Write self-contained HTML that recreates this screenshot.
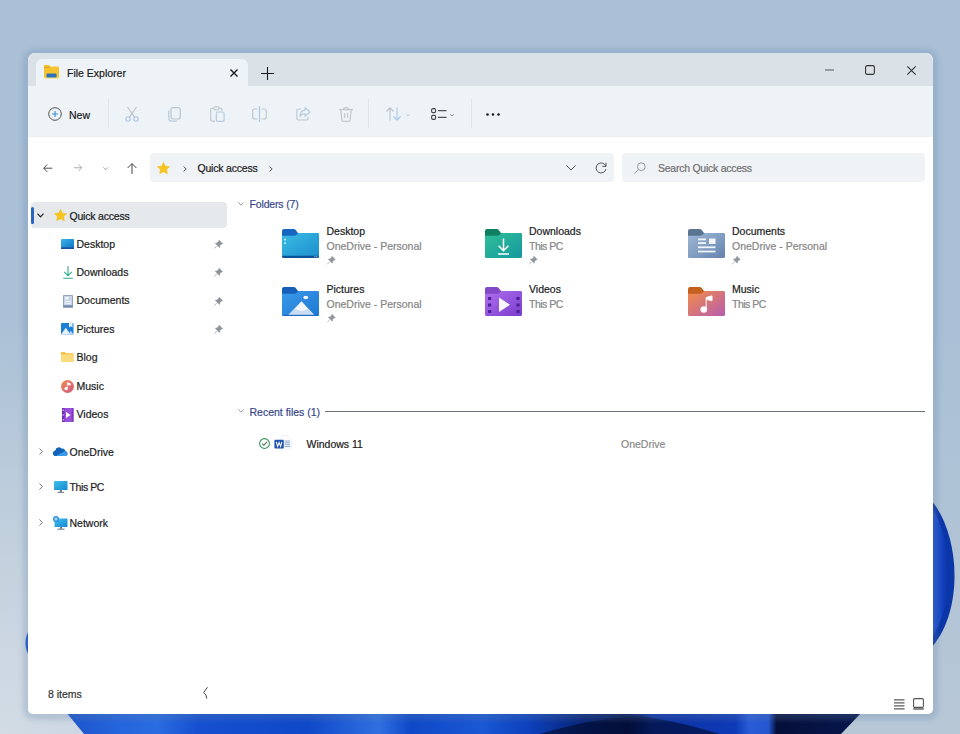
<!DOCTYPE html>
<html lang="en">
<head>
<meta charset="utf-8">
<title>File Explorer</title>
<style>
*{box-sizing:border-box;margin:0;padding:0}
html,body{width:960px;height:734px;overflow:hidden}
body{position:relative;font-family:"Liberation Sans",sans-serif;font-size:10.5px;color:#1b1b1b;background:#a9c0d6}
.abs{position:absolute}
#wall{position:absolute;left:0;top:0;width:960px;height:734px}
#shadow{position:absolute;left:28px;top:53px;width:905px;height:661px;border-radius:7px 7px 5px 5px;box-shadow:0 1px 5px 5px rgba(100,130,170,.26)}
#win{position:absolute;left:28px;top:53px;width:905px;height:661px;border-radius:7px 7px 5px 5px;background:#fff;overflow:hidden}
#titlebar{position:absolute;left:0;top:0;width:905px;height:33px;background:#dae2e7}
#tab{position:absolute;left:8px;top:6px;width:212px;height:28px;background:#eef3f7;border-radius:6px 6px 0 0}
#toolbar{position:absolute;left:0;top:33px;width:905px;height:51px;background:#eef3f7;border-bottom:1px solid #ecf0f4}
.t{position:absolute;white-space:nowrap;line-height:12px;-webkit-text-stroke:.2px currentColor}
.sep{position:absolute;top:46px;width:1px;height:29px;background:#dfe5ea}
.box{position:absolute;top:100px;height:29px;background:#f0f3f6;border-radius:4px}
.sb{position:absolute;left:0;white-space:nowrap;line-height:12px}
.g{color:#858585}
.hd{color:#38478a}
svg{position:absolute;overflow:visible}
</style>
</head>
<body>
<svg id="wall" viewBox="0 0 960 734">
  <defs>
    <linearGradient id="bgg" x1="0" y1="0" x2="0" y2="1">
      <stop offset="0" stop-color="#a9c0d6"/>
      <stop offset=".45" stop-color="#a9c0d6"/>
      <stop offset="1" stop-color="#b7c7d6"/>
    </linearGradient>
    <radialGradient id="bgl" gradientUnits="userSpaceOnUse" cx="0" cy="734" r="420">
      <stop offset="0" stop-color="#d3dce5" stop-opacity="1"/>
      <stop offset=".35" stop-color="#cdd8e2" stop-opacity=".75"/>
      <stop offset="1" stop-color="#c8d4df" stop-opacity="0"/>
    </radialGradient>
    <linearGradient id="bl1" gradientUnits="userSpaceOnUse" x1="70" y1="0" x2="862" y2="0">
      <stop offset="0" stop-color="#1d55cc"/>
      <stop offset=".06" stop-color="#2464dc"/>
      <stop offset=".11" stop-color="#2a6ce2"/>
      <stop offset=".16" stop-color="#1650d0"/>
      <stop offset=".3" stop-color="#0f48c8"/>
      <stop offset=".39" stop-color="#2f70e2"/>
      <stop offset=".43" stop-color="#0f48c8"/>
      <stop offset=".52" stop-color="#1a58d4"/>
      <stop offset=".58" stop-color="#0d40bc"/>
      <stop offset=".65" stop-color="#072272"/>
      <stop offset=".705" stop-color="#04144c"/>
      <stop offset=".735" stop-color="#0b30a0"/>
      <stop offset=".84" stop-color="#0e3ab8"/>
      <stop offset=".858" stop-color="#2a5cd8"/>
      <stop offset=".882" stop-color="#2456d0"/>
      <stop offset=".892" stop-color="#050f3a"/>
      <stop offset="1" stop-color="#06164c"/>
    </linearGradient>
    <linearGradient id="pet" x1="0" y1="0" x2="1" y2="0">
      <stop offset="0" stop-color="#1b52d2"/>
      <stop offset=".55" stop-color="#1546c4"/>
      <stop offset="1" stop-color="#0b34a4"/>
    </linearGradient>
  </defs>
  <rect width="960" height="734" fill="url(#bgg)"/>
  <rect width="960" height="734" fill="url(#bgl)"/>
  <path d="M66 712 L862 712 L841 734 L84 734 Z" fill="url(#bl1)"/>
  <path d="M540 734 C580 722 610 718 640 716 C670 720 700 728 720 734 Z" fill="#020a2c" opacity=".6"/>
  <path d="M930 499 C946 516 955 548 954.500 578 C954 606 946 632 930 649 Z" fill="#0b36a8"/>
  <path d="M930 505 C942 520 949 550 948.500 578 C948 600 942 624 930 640 Z" fill="url(#pet)"/>
  <path d="M30 629 C24 636 24 650 30 657 Z" fill="#1a56d0"/>
</svg>
<div id="shadow"></div>
<div id="win">
  <div id="titlebar"></div>
  <div id="tab"></div>
  <div id="toolbar"></div>

  <!-- tab content -->
  <svg style="left:16px;top:12px" width="15" height="14" viewBox="0 0 15 14">
    <path d="M0 1.2 Q0 0 1.2 0 H5 L6.5 1.6 H13.8 Q15 1.6 15 2.8 V12 Q15 13 14 13 H1 Q0 13 0 12 Z" fill="#f6c330"/>
    <rect x="0" y="1.6" width="6" height="1.2" fill="#e0a21c"/>
    <path d="M2.5 13 V9.6 Q2.5 8.4 3.7 8.4 H11.3 Q12.5 8.4 12.5 9.6 V13 Z" fill="#2a72b8"/>
    <rect x="0" y="12.6" width="15" height="1.2" rx=".5" fill="#fbe08a"/>
  </svg>
  <div class="t" id="t_tab" style="left:39px;top:13.500px;font-size:10.5px">File Explorer</div>
  <svg style="left:202px;top:16px" width="8" height="8" viewBox="0 0 8 8"><path d="M.5 .5 L7.5 7.5 M7.5 .5 L.5 7.5" stroke="#1b1b1b" stroke-width="1.4" fill="none"/></svg>
  <svg style="left:233px;top:14px" width="13" height="13" viewBox="0 0 13 13"><path d="M6.5 0 V13 M0 6.5 H13" stroke="#1b1b1b" stroke-width="1.1" fill="none"/></svg>

  <!-- window controls -->
  <svg style="left:797px;top:16px" width="9" height="2" viewBox="0 0 9 2"><path d="M0 1 H9" stroke="#555" stroke-width="1.1"/></svg>
  <svg style="left:837px;top:12px" width="10" height="10" viewBox="0 0 10 10"><rect x=".6" y=".6" width="8.8" height="8.8" rx="1.6" fill="none" stroke="#333" stroke-width="1.1"/></svg>
  <svg style="left:879px;top:12.5px" width="9" height="9" viewBox="0 0 9 9"><path d="M.3 .3 L8.7 8.7 M8.7 .3 L.3 8.7" stroke="#333" stroke-width="1.1" fill="none"/></svg>

  <!-- toolbar -->
  <svg style="left:20px;top:54px" width="14" height="14" viewBox="0 0 14 14"><circle cx="7" cy="7" r="6.3" fill="none" stroke="#555" stroke-width="1"/><path d="M7 4 V10 M4 7 H10" stroke="#3b8ad8" stroke-width="1.1"/></svg>
  <div class="t" id="t_new" style="left:41px;top:55.500px">New</div>
  <div class="sep" style="left:80px"></div>
  <!-- scissors -->
  <svg style="left:97px;top:54px" width="14" height="15" viewBox="0 0 14 15" fill="none" stroke="#b3c3d3" stroke-width="1.1"><path d="M2.5 0 L9.6 10.4 M11.5 0 L4.4 10.4" stroke="#bcc4cc"/><circle cx="3" cy="12" r="2.2" stroke="#a9c6e4"/><circle cx="11" cy="12" r="2.2" stroke="#a9c6e4"/></svg>
  <!-- copy -->
  <svg style="left:139.5px;top:54px" width="13" height="15" viewBox="0 0 13 15" fill="none" stroke="#b9c6d4" stroke-width="1.2"><rect x="3" y=".6" width="9.2" height="11.4" rx="2"/><path d="M.8 3.5 V11.5 Q.8 14.2 3.5 14.2 H9" stroke="#b4cbe2"/></svg>
  <!-- paste -->
  <svg style="left:181.5px;top:53px" width="15" height="16" viewBox="0 0 15 16" fill="none" stroke="#c3c9d0" stroke-width="1.2"><path d="M4 2.4 H1.8 Q.7 2.4 .7 3.5 V14 Q.7 15.2 1.8 15.2 H5 M9 2.4 H11 Q12 2.4 12 3.5 V5"/><rect x="4" y=".8" width="5" height="3" rx="1"/><rect x="6.3" y="6" width="7.8" height="9.3" rx="1.4" stroke="#b4cbe2"/></svg>
  <!-- rename -->
  <svg style="left:224px;top:53px" width="15" height="16" viewBox="0 0 15 16" fill="none" stroke="#c0c8d0" stroke-width="1.2"><path d="M5.5 3 H2.8 Q.7 3 .7 5 V11 Q.7 13 2.8 13 H5.5 M9.5 3 H12.2 Q14.3 3 14.3 5 V11 Q14.3 13 12.2 13 H9.5"/><path d="M7.5 0 V16" stroke="#a9c9ea"/></svg>
  <!-- share -->
  <svg style="left:267.5px;top:54px" width="15" height="14" viewBox="0 0 15 14" fill="none" stroke="#b6cbe0" stroke-width="1.2" stroke-linejoin="round"><path d="M5 2 H2.8 Q.8 2 .8 4 V11 Q.8 13 2.8 13 H10 Q12 13 12 11 V10" stroke="#c2cad2"/><path d="M9 .8 L14 5 L9 9.2 V6.8 Q5.5 6.6 4 9.5 Q4.2 3.6 9 3.2 Z"/></svg>
  <!-- trash -->
  <svg style="left:310.5px;top:54px" width="14" height="15" viewBox="0 0 14 15" fill="none" stroke="#c3c8ce" stroke-width="1.2"><path d="M0 2.6 H14 M4.6 2.4 Q4.6 .6 7 .6 Q9.4 .6 9.4 2.4 M1.8 2.8 L2.8 12.6 Q3 14.3 4.6 14.3 H9.4 Q11 14.3 11.2 12.6 L12.2 2.8 M5.5 6 V11 M8.5 6 V11"/></svg>
  <div class="sep" style="left:340px"></div>
  <!-- sort -->
  <svg style="left:358px;top:54px" width="15" height="14" viewBox="0 0 15 14" fill="none" stroke="#b9c3cd" stroke-width="1.1"><path d="M4 13.5 V1 M.5 4.5 L4 .8 L7.5 4.5"/><path d="M11 .5 V13 M7.5 9.5 L11 13.2 L14.500 9.5" stroke="#a9c9ea"/></svg>
  <svg style="left:377.500px;top:60.500px" width="4" height="2.400" viewBox="0 0 5 3"><path d="M.3 .3 L2.500 2.500 L4.700 .3" fill="none" stroke="#b0b8c0" stroke-width=".9"/></svg>
  <!-- view -->
  <svg style="left:402.500px;top:55px" width="16" height="12" viewBox="0 0 16 12" fill="none" stroke="#444" stroke-width="1.1"><rect x=".6" y=".6" width="4" height="4" rx="1.3"/><rect x=".6" y="7.400" width="4" height="4" rx="1.3"/><path d="M7 2.600 H15.500 M7 9.400 H15.500" stroke="#555"/></svg>
  <svg style="left:421.500px;top:60.500px" width="4" height="2.400" viewBox="0 0 5 3"><path d="M.3 .3 L2.500 2.500 L4.700 .3" fill="none" stroke="#555" stroke-width=".9"/></svg>
  <div class="sep" style="left:443px"></div>
  <svg style="left:458px;top:59.500px" width="14" height="3" viewBox="0 0 14 3" fill="#1b1b1b"><circle cx="1.500" cy="1.500" r="1.300"/><circle cx="7" cy="1.500" r="1.300"/><circle cx="12.500" cy="1.500" r="1.300"/></svg>

  <!-- nav row -->
  <svg style="left:14.500px;top:110.800px" width="9.400" height="8.400" viewBox="0 0 10 9" fill="none" stroke="#444" stroke-width="1"><path d="M10 4.500 H.8 M4.500 .5 L.7 4.500 L4.500 8.500"/></svg>
  <svg style="left:46.400px;top:111.200px" width="8.400" height="7.500" viewBox="0 0 9 8" fill="none" stroke="#a8a8a8" stroke-width="1"><path d="M0 4 H8.200 M5 .5 L8.400 4 L5 7.500"/></svg>
  <svg style="left:74.800px;top:113.800px" width="5.200" height="3.500" viewBox="0 0 6 4"><path d="M.4 .4 L3 3.200 L5.600 .4" fill="none" stroke="#888" stroke-width=".9"/></svg>
  <svg style="left:99px;top:110px" width="10" height="11" viewBox="0 0 10 11" fill="none" stroke="#444" stroke-width="1"><path d="M5 11 V.8 M.6 5 L5 .6 L9.400 5"/></svg>
  <div class="box" style="left:122px;width:464px"></div>
  <div class="box" style="left:594px;width:303px"></div>
  <svg style="left:129px;top:109px" width="13" height="12" viewBox="0 0 13 12"><path d="M6.500 .3 L8.400 4.200 L12.700 4.700 L9.500 7.600 L10.400 11.800 L6.500 9.700 L2.600 11.800 L3.500 7.600 L.3 4.700 L4.600 4.200 Z" fill="#f8c51c" stroke="#f0b400" stroke-width=".4" stroke-linejoin="round"/></svg>
  <svg style="left:154.500px;top:112.500px" width="4" height="6" viewBox="0 0 4 6"><path d="M.6 .5 L3.200 3 L.6 5.500" fill="none" stroke="#444" stroke-width=".9"/></svg>
  <div class="t" id="t_addr" style="left:169.500px;top:109px;letter-spacing:-.2px">Quick access</div>
  <svg style="left:240.500px;top:112.500px" width="4" height="6" viewBox="0 0 4 6"><path d="M.6 .5 L3.200 3 L.6 5.500" fill="none" stroke="#444" stroke-width=".9"/></svg>
  <svg style="left:538px;top:112px" width="10" height="6" viewBox="0 0 10 6"><path d="M.5 .5 L5 5 L9.500 .5" fill="none" stroke="#555" stroke-width="1"/></svg>
  <svg style="left:566.500px;top:108.500px" width="12" height="12" viewBox="0 0 12 12" fill="none" stroke="#555" stroke-width="1"><path d="M10.800 4.200 A5 5 0 1 0 11 7"/><path d="M11 .8 V4.400 H7.400"/></svg>
  <svg style="left:606px;top:109px" width="12" height="12" viewBox="0 0 12 12" fill="none" stroke="#999" stroke-width="1"><circle cx="7.300" cy="4.700" r="3.900"/><path d="M4.500 7.500 L.5 11.500"/></svg>
  <div class="t g" id="t_search" style="left:630px;top:109px;color:#707070;letter-spacing:-.25px">Search Quick access</div>

  <!-- sidebar -->
  <div class="abs" style="left:3px;top:149px;width:196px;height:26px;background:#e5e9ec;border-radius:4px"></div>
  <div class="abs" style="left:3px;top:153.500px;width:2.500px;height:17px;background:#2a64c0;border-radius:1.500px"></div>
  <svg style="left:9px;top:160px" width="7" height="5" viewBox="0 0 7 5"><path d="M.5 .6 L3.500 3.800 L6.500 .6" fill="none" stroke="#222" stroke-width="1.200"/></svg>
  <svg style="left:25.500px;top:156px" width="13" height="12" viewBox="0 0 13 12"><path d="M6.500 .3 L8.400 4.200 L12.700 4.700 L9.500 7.600 L10.400 11.800 L6.500 9.700 L2.600 11.800 L3.500 7.600 L.3 4.700 L4.600 4.200 Z" fill="#f8c51c" stroke="#f0b400" stroke-width=".4" stroke-linejoin="round"/></svg>
  <div class="t" id="s_qa" style="left:41.500px;top:156.500px;letter-spacing:-.2px">Quick access</div>

  <!-- Desktop -->
  <svg style="left:33px;top:185.500px" width="13" height="10" viewBox="0 0 13 10"><defs><linearGradient id="dk" x1="0" y1="0" x2="1" y2="1"><stop offset="0" stop-color="#39b6e8"/><stop offset="1" stop-color="#0f72c4"/></linearGradient></defs><rect width="13" height="9.300" rx=".8" fill="url(#dk)"/><rect y="8.400" width="13" height="1.600" fill="#1a4f9c"/></svg>
  <div class="t" id="s_desktop" style="left:48.500px;top:185px">Desktop</div>
  <!-- Downloads -->
  <svg style="left:34.500px;top:213px" width="10" height="13" viewBox="0 0 10 13" fill="none" stroke="#2fae8e" stroke-width="1.100"><path d="M5 0 V9.500 M1.200 5.800 L5 9.700 L8.800 5.800 M.2 12.300 H9.800"/></svg>
  <div class="t" id="s_downloads" style="left:48.500px;top:213.400px">Downloads</div>
  <!-- Documents -->
  <svg style="left:35px;top:241.500px" width="10" height="12.500" viewBox="0 0 10 12.500"><rect width="10" height="12.500" rx="1" fill="#8fa6c4"/><rect x="1" y="1" width="8" height="9" fill="#c9d6e6"/><rect x="2.500" y="2" width="3" height="2.500" fill="#f4f7fb"/><rect x="2" y="6" width="6" height=".9" fill="#f4f7fb"/><rect x="2" y="7.800" width="6" height=".9" fill="#f4f7fb"/><rect y="10.800" width="10" height="1.700" fill="#6f87a8"/></svg>
  <div class="t" id="s_documents" style="left:48.500px;top:241.400px">Documents</div>
  <!-- Pictures -->
  <svg style="left:33px;top:270px" width="12.500" height="11.500" viewBox="0 0 12.500 11.500"><rect width="12.500" height="11.500" rx="1" fill="#1c7fd6"/><path d="M0 11.500 L4.800 4.800 L9.600 11.500 Z" fill="#e8f1fb"/><path d="M7 11.500 L9.800 7.800 L12.500 11.500 Z" fill="#b9d5f2"/><path d="M8 0 H11.500 V4.500 L9.750 3.200 L8 4.500 Z" fill="#e8f1fb"/></svg>
  <div class="t" id="s_pictures" style="left:48.500px;top:269.800px">Pictures</div>
  <!-- Blog -->
  <svg style="left:33px;top:299px" width="12.500" height="10" viewBox="0 0 12.500 10"><path d="M0 .8 Q0 0 .8 0 H4 L5 1.200 H11.700 Q12.500 1.200 12.500 2 V9.200 Q12.500 10 11.700 10 H.8 Q0 10 0 9.200 Z" fill="#f3c044"/><path d="M0 2.600 H12.500 V9.200 Q12.500 10 11.700 10 H.8 Q0 10 0 9.200 Z" fill="#fbdc7c"/></svg>
  <div class="t" id="s_blog" style="left:48.500px;top:298.400px">Blog</div>
  <!-- Music -->
  <svg style="left:33px;top:326.500px" width="13" height="13" viewBox="0 0 13 13"><defs><linearGradient id="mu" x1="0" y1="0" x2="1" y2="1"><stop offset="0" stop-color="#ee8a52"/><stop offset="1" stop-color="#cf5a86"/></linearGradient></defs><circle cx="6.500" cy="6.500" r="6.500" fill="url(#mu)"/><circle cx="5.200" cy="8.600" r="1.700" fill="#fff"/><path d="M6.300 8.600 V2.600 L9.300 3.500 V5.200 L6.300 4.400" fill="#fff" stroke="#fff" stroke-width=".6"/></svg>
  <div class="t" id="s_music" style="left:48.500px;top:326.800px">Music</div>
  <!-- Videos -->
  <svg style="left:33.500px;top:354.500px" width="11.500" height="14" viewBox="0 0 11.500 14"><rect width="11.500" height="14" rx="1" fill="#9a4fd8"/><rect width="2.400" height="14" fill="#6f2fb4"/><rect x="9.800" width="1.700" height="14" fill="#7d3cc4"/><path d="M4 4 L8.600 7 L4 10 Z" fill="#fff"/><rect x=".6" y="1.500" width="1.200" height="1.500" fill="#d9b8f4"/><rect x=".6" y="6.200" width="1.200" height="1.500" fill="#d9b8f4"/><rect x=".6" y="11" width="1.200" height="1.500" fill="#d9b8f4"/></svg>
  <div class="t" id="s_videos" style="left:48.500px;top:355.300px">Videos</div>

  <!-- pins -->
  <svg class="pin" style="left:186px;top:187px" width="8.800" height="8.800" viewBox="0 0 10 10"><path d="M5.800 .4 L9.600 4.200 L8.300 4.600 L6.600 6.300 L6.300 8.400 L1.600 3.700 L3.700 3.400 L5.400 1.700 Z M3.600 6.400 L.3 9.700" fill="#8b9199" stroke="#8b9199" stroke-width=".8" stroke-linejoin="round"/></svg>
  <svg class="pin" style="left:186px;top:215.400px" width="8.800" height="8.800" viewBox="0 0 10 10"><path d="M5.800 .4 L9.600 4.200 L8.300 4.600 L6.600 6.300 L6.300 8.400 L1.600 3.700 L3.700 3.400 L5.400 1.700 Z M3.600 6.400 L.3 9.700" fill="#8b9199" stroke="#8b9199" stroke-width=".8" stroke-linejoin="round"/></svg>
  <svg class="pin" style="left:186px;top:243.800px" width="8.800" height="8.800" viewBox="0 0 10 10"><path d="M5.800 .4 L9.600 4.200 L8.300 4.600 L6.600 6.300 L6.300 8.400 L1.600 3.700 L3.700 3.400 L5.400 1.700 Z M3.600 6.400 L.3 9.700" fill="#8b9199" stroke="#8b9199" stroke-width=".8" stroke-linejoin="round"/></svg>
  <svg class="pin" style="left:186px;top:272.200px" width="8.800" height="8.800" viewBox="0 0 10 10"><path d="M5.800 .4 L9.600 4.200 L8.300 4.600 L6.600 6.300 L6.300 8.400 L1.600 3.700 L3.700 3.400 L5.400 1.700 Z M3.600 6.400 L.3 9.700" fill="#8b9199" stroke="#8b9199" stroke-width=".8" stroke-linejoin="round"/></svg>

  <!-- OneDrive / This PC / Network -->
  <svg style="left:10.500px;top:394.500px" width="4" height="7" viewBox="0 0 4 7"><path d="M.5 .5 L3.400 3.500 L.5 6.500" fill="none" stroke="#666" stroke-width=".9"/></svg>
  <svg style="left:24.500px;top:393px" width="14.500" height="10" viewBox="0 0 14.500 10"><path d="M3.200 10 Q0 10 0 7.200 Q0 4.800 2.400 4.400 Q3 1.600 5.600 1.400 Q7.400 1.300 8.600 2.800 Q9.600 2.200 10.800 2.700 Q12.200 3.400 12.300 5 Q14.500 5.400 14.500 7.500 Q14.500 10 12 10 Z" fill="#1a78d4"/><path d="M0 7.200 Q0 4.800 2.400 4.400 Q3 1.600 5.600 1.400 Q7.400 1.300 8.600 2.800 L12.300 5 L3.200 10 Q0 10 0 7.200Z" fill="#1263b8"/><path d="M3.200 10 L12.300 5 Q14.500 5.400 14.500 7.500 Q14.500 10 12 10 Z" fill="#3a9be8"/></svg>
  <div class="t" id="s_onedrive" style="left:41.500px;top:392.600px">OneDrive</div>

  <svg style="left:10.500px;top:430px" width="4" height="7" viewBox="0 0 4 7"><path d="M.5 .5 L3.400 3.500 L.5 6.500" fill="none" stroke="#666" stroke-width=".9"/></svg>
  <svg style="left:25.500px;top:428px" width="13.500" height="12" viewBox="0 0 13.500 12"><defs><linearGradient id="pc" x1="0" y1="0" x2="1" y2="1"><stop offset="0" stop-color="#3fc0ec"/><stop offset="1" stop-color="#1488d0"/></linearGradient></defs><rect width="13.500" height="9" rx=".6" fill="url(#pc)"/><rect x="5.800" y="9" width="2" height="2" fill="#6b7680"/><rect x="3.500" y="10.800" width="6.500" height="1.200" fill="#7f8a94"/></svg>
  <div class="t" id="s_thispc" style="left:41.500px;top:428.300px;letter-spacing:-.4px">This PC</div>

  <svg style="left:10.500px;top:465.700px" width="4" height="7" viewBox="0 0 4 7"><path d="M.5 .5 L3.400 3.500 L.5 6.500" fill="none" stroke="#666" stroke-width=".9"/></svg>
  <svg style="left:25px;top:462.500px" width="14.500" height="14" viewBox="0 0 14.500 14"><rect x="1.500" y="2.500" width="13" height="8.500" rx=".6" fill="url(#pc)"/><rect x="7" y="11" width="2" height="1.800" fill="#6b7680"/><rect x="4.500" y="12.600" width="7" height="1.200" fill="#7f8a94"/><circle cx="3" cy="3" r="3" fill="#2a8fd8"/><path d="M1 3 H5 M3 1 V5" stroke="#d8eefc" stroke-width=".8"/></svg>
  <div class="t" id="s_network" style="left:41.500px;top:464px">Network</div>

  <div class="t" id="s_items" style="left:20px;top:635.400px;color:#333">8 items</div>
  <svg style="left:175px;top:633.500px" width="5" height="12" viewBox="0 0 5 12"><path d="M4.500 .3 L.6 5.500 Q3.500 7 3.800 11.500" fill="none" stroke="#444" stroke-width="1"/></svg>

  <!-- main: Folders header -->
  <svg style="left:209.500px;top:149px" width="6" height="4" viewBox="0 0 6 4"><path d="M.4 .4 L3 3.200 L5.600 .4" fill="none" stroke="#8a8f99" stroke-width=".9"/></svg>
  <div class="t hd" id="m_folders" style="left:221.500px;top:144.500px;letter-spacing:-.15px">Folders (7)</div>

  <!-- tiles inserted here -->
  <!--TILES-->
  <svg style="left:254px;top:176px" width="37" height="29" viewBox="0 0 37 29"><defs><linearGradient id="g_desktop" x1="0" y1="0" x2="1" y2="1"><stop offset="0" stop-color="#3abce4"/><stop offset="1" stop-color="#1c8ecc"/></linearGradient></defs><path d="M0 2 Q0 0 2 0 H11.800 Q12.800 0 13.500 .800 L16 4 H35 Q37 4 37 6 V27 Q37 29 35 29 H2 Q0 29 0 27 Z" fill="#1767c2"/><path d="M0 6.800 H12.600 Q13.600 6.800 14.400 6 L15.600 4.700 Q16.300 4 17.300 4 H35 Q37 4 37 6 V27 Q37 29 35 29 H2 Q0 29 0 27 Z" fill="url(#g_desktop)"/><path d="M0 26.800 H37 V27 Q37 29 35 29 H2 Q0 29 0 27 Z" fill="#0b4f96"/><rect x="2.200" y="9.900" width="1.700" height="1.500" fill="#e8f6fd"/><rect x="2.200" y="13.400" width="1.700" height="1.500" fill="#e8f6fd"/><rect x="32.300" y="27.300" width="1" height="1" fill="#cfe6f8"/><rect x="34.200" y="27.300" width="1" height="1" fill="#cfe6f8"/></svg>
  <div class="t" id="n_desktop" style="left:298.5px;top:172.2px">Desktop</div>
  <div class="t g" id="u_desktop" style="left:298.5px;top:186.7px">OneDrive - Personal</div>
  <svg style="left:298.5px;top:202.5px" width="8.500" height="8.500" viewBox="0 0 10 10"><path d="M5.800 .4 L9.600 4.200 L8.300 4.600 L6.600 6.300 L6.300 8.400 L1.600 3.700 L3.700 3.400 L5.400 1.700 Z M3.600 6.400 L.3 9.700" fill="#92979f" stroke="#92979f" stroke-width=".8" stroke-linejoin="round"/></svg>
  <svg style="left:456.5px;top:176px" width="37" height="29" viewBox="0 0 37 29"><defs><linearGradient id="g_downloads" x1="0" y1="0" x2="1" y2="1"><stop offset="0" stop-color="#2fc096"/><stop offset="1" stop-color="#1597a0"/></linearGradient></defs><path d="M0 2 Q0 0 2 0 H11.800 Q12.800 0 13.500 .800 L16 4 H35 Q37 4 37 6 V27 Q37 29 35 29 H2 Q0 29 0 27 Z" fill="#0f7f62"/><path d="M0 6.800 H12.600 Q13.600 6.800 14.400 6 L15.600 4.700 Q16.300 4 17.300 4 H35 Q37 4 37 6 V27 Q37 29 35 29 H2 Q0 29 0 27 Z" fill="url(#g_downloads)"/><path d="M18.500 9.500 V21.500 M13.600 16.800 L18.500 21.700 L23.400 16.800 M13 25 H24" fill="none" stroke="#fff" stroke-width="1.500"/></svg>
  <div class="t" id="n_downloads" style="left:501.0px;top:172.2px">Downloads</div>
  <div class="t g" id="u_downloads" style="left:501.0px;top:186.7px;letter-spacing:-.5px">This PC</div>
  <svg style="left:501.0px;top:202.5px" width="8.500" height="8.500" viewBox="0 0 10 10"><path d="M5.800 .4 L9.600 4.200 L8.300 4.600 L6.600 6.300 L6.300 8.400 L1.600 3.700 L3.700 3.400 L5.400 1.700 Z M3.600 6.400 L.3 9.700" fill="#92979f" stroke="#92979f" stroke-width=".8" stroke-linejoin="round"/></svg>
  <svg style="left:659.5px;top:176px" width="37" height="29" viewBox="0 0 37 29"><defs><linearGradient id="g_documents" x1="0" y1="0" x2="1" y2="1"><stop offset="0" stop-color="#a0b8d6"/><stop offset="1" stop-color="#6484ae"/></linearGradient></defs><path d="M0 2 Q0 0 2 0 H11.800 Q12.800 0 13.500 .800 L16 4 H35 Q37 4 37 6 V27 Q37 29 35 29 H2 Q0 29 0 27 Z" fill="#5a7492"/><path d="M0 6.800 H12.600 Q13.600 6.800 14.400 6 L15.600 4.700 Q16.300 4 17.300 4 H35 Q37 4 37 6 V27 Q37 29 35 29 H2 Q0 29 0 27 Z" fill="url(#g_documents)"/><rect x="10" y="9.500" width="8" height="1.800" fill="#f2f5f9"/><rect x="10" y="13.200" width="8" height="1.800" fill="#f2f5f9"/><rect x="21" y="9.500" width="6.500" height="5.500" fill="#f2f5f9"/><rect x="10" y="17.400" width="17.500" height="1.800" fill="#f2f5f9"/><rect x="10" y="21.600" width="17.500" height="1.800" fill="#f2f5f9"/></svg>
  <div class="t" id="n_documents" style="left:704.0px;top:172.2px">Documents</div>
  <div class="t g" id="u_documents" style="left:704.0px;top:186.7px">OneDrive - Personal</div>
  <svg style="left:704.0px;top:202.5px" width="8.500" height="8.500" viewBox="0 0 10 10"><path d="M5.800 .4 L9.600 4.200 L8.300 4.600 L6.600 6.300 L6.300 8.400 L1.600 3.700 L3.700 3.400 L5.400 1.700 Z M3.600 6.400 L.3 9.700" fill="#92979f" stroke="#92979f" stroke-width=".8" stroke-linejoin="round"/></svg>
  <svg style="left:254px;top:234px" width="37" height="29" viewBox="0 0 37 29"><defs><linearGradient id="g_pictures" x1="0" y1="0" x2="1" y2="1"><stop offset="0" stop-color="#3a9ae8"/><stop offset="1" stop-color="#1f78d4"/></linearGradient></defs><path d="M0 2 Q0 0 2 0 H11.800 Q12.800 0 13.500 .800 L16 4 H35 Q37 4 37 6 V27 Q37 29 35 29 H2 Q0 29 0 27 Z" fill="#155fb8"/><path d="M0 6.800 H12.600 Q13.600 6.800 14.400 6 L15.600 4.700 Q16.300 4 17.300 4 H35 Q37 4 37 6 V27 Q37 29 35 29 H2 Q0 29 0 27 Z" fill="url(#g_pictures)"/><clipPath id="cp_pic"><path d="M0 6.800 H12.600 Q13.600 6.800 14.400 6 L15.600 4.700 Q16.300 4 17.300 4 H35 Q37 4 37 6 V27 Q37 29 35 29 H2 Q0 29 0 27 Z"/></clipPath><g clip-path="url(#cp_pic)"><path d="M5.500 29 L19.500 14.200 L33 29 Z" fill="#f4f8fd"/><path d="M5.500 29 L12.600 21.600 Q19.500 26.500 26.300 21.600 L33 29 Z" fill="#c9dcf2"/><rect x="0" y="27.800" width="37" height="1.200" fill="#1a6cc8"/></g><ellipse cx="23.800" cy="10.500" rx="2.400" ry="1.700" fill="#f4f8fd"/></svg>
  <div class="t" id="n_pictures" style="left:298.5px;top:230.2px">Pictures</div>
  <div class="t g" id="u_pictures" style="left:298.5px;top:244.7px">OneDrive - Personal</div>
  <svg style="left:298.5px;top:260.5px" width="8.500" height="8.500" viewBox="0 0 10 10"><path d="M5.800 .4 L9.600 4.200 L8.300 4.600 L6.600 6.300 L6.300 8.400 L1.600 3.700 L3.700 3.400 L5.400 1.700 Z M3.600 6.400 L.3 9.700" fill="#92979f" stroke="#92979f" stroke-width=".8" stroke-linejoin="round"/></svg>
  <svg style="left:456.5px;top:234px" width="37" height="29" viewBox="0 0 37 29"><defs><linearGradient id="g_videos" x1="0" y1="0" x2="1" y2="1"><stop offset="0" stop-color="#b070f0"/><stop offset="1" stop-color="#7a3ccc"/></linearGradient></defs><path d="M0 2 Q0 0 2 0 H11.800 Q12.800 0 13.500 .800 L16 4 H35 Q37 4 37 6 V27 Q37 29 35 29 H2 Q0 29 0 27 Z" fill="#8248c8"/><path d="M0 6.800 H12.600 Q13.600 6.800 14.400 6 L15.600 4.700 Q16.300 4 17.300 4 H35 Q37 4 37 6 V27 Q37 29 35 29 H2 Q0 29 0 27 Z" fill="url(#g_videos)"/><rect x="3" y="10" width="3.200" height="3" rx=".6" fill="#4a2390"/><rect x="3" y="16.500" width="3.200" height="3" rx=".6" fill="#4a2390"/><rect x="3" y="23" width="3.200" height="3" rx=".6" fill="#4a2390"/><rect x="31.400" y="10" width="3.200" height="3" rx=".6" fill="#4a2390"/><rect x="31.400" y="16.500" width="3.200" height="3" rx=".6" fill="#4a2390"/><rect x="31.400" y="23" width="3.200" height="3" rx=".6" fill="#4a2390"/><path d="M14 10.500 L25 17.800 L14 25 Z" fill="#fbf7ff"/></svg>
  <div class="t" id="n_videos" style="left:501.0px;top:230.2px">Videos</div>
  <div class="t g" id="u_videos" style="left:501.0px;top:244.7px;letter-spacing:-.5px">This PC</div>
  <svg style="left:659.5px;top:234px" width="37" height="29" viewBox="0 0 37 29"><defs><linearGradient id="g_music" x1="0" y1="0" x2="1" y2="1"><stop offset="0" stop-color="#f38d48"/><stop offset="1" stop-color="#b85cb0"/></linearGradient></defs><path d="M0 2 Q0 0 2 0 H11.800 Q12.800 0 13.500 .800 L16 4 H35 Q37 4 37 6 V27 Q37 29 35 29 H2 Q0 29 0 27 Z" fill="#c4611e"/><path d="M0 6.800 H12.600 Q13.600 6.800 14.400 6 L15.600 4.700 Q16.300 4 17.300 4 H35 Q37 4 37 6 V27 Q37 29 35 29 H2 Q0 29 0 27 Z" fill="url(#g_music)"/><circle cx="15.800" cy="22.500" r="3.300" fill="#fff"/><path d="M18.200 22.500 V10.500 L24 8.800 V13.800 L18.200 12.200" fill="#fff" stroke="#fff" stroke-width="1" stroke-linejoin="round"/></svg>
  <div class="t" id="n_music" style="left:704.0px;top:230.2px">Music</div>
  <div class="t g" id="u_music" style="left:704.0px;top:244.7px;letter-spacing:-.5px">This PC</div>
  <!--/TILES-->

  <!-- Recent files -->
  <svg style="left:209.500px;top:356px" width="6" height="4" viewBox="0 0 6 4"><path d="M.4 .4 L3 3.200 L5.600 .4" fill="none" stroke="#8a8f99" stroke-width=".9"/></svg>
  <div class="t hd" id="m_recent" style="left:221.500px;top:353px">Recent files (1)</div>
  <div class="abs" style="left:297px;top:358px;width:600px;height:1px;background:#6d7178"></div>

  <svg style="left:231px;top:385px" width="11" height="11" viewBox="0 0 11 11" fill="none" stroke="#35935a" stroke-width="1.050"><circle cx="5.500" cy="5.500" r="4.900"/><path d="M3.200 5.600 L4.900 7.300 L8 3.900" stroke="#3f6a4c"/></svg>
  <svg style="left:246px;top:381.500px" width="18" height="14.500" viewBox="0 0 18 14.500"><path d="M7 .5 H14 L17.500 4 V14 H7 Z" fill="#fdfdfe" stroke="#e2e6ec" stroke-width=".5"/><rect x="10.700" y="5.600" width="5.400" height=".9" fill="#7f9ccc"/><rect x="10.700" y="7.400" width="5.400" height=".9" fill="#7f9ccc"/><rect x="10.700" y="9.200" width="5.400" height=".9" fill="#7f9ccc"/><rect x="10.700" y="11" width="5.400" height=".9" fill="#7f9ccc"/><rect x=".4" y="4.800" width="9.400" height="8.600" rx=".9" fill="#2053ac"/><path d="M2.300 6.800 L3.600 11.400 L5.100 7.500 L6.600 11.400 L7.900 6.800" fill="none" stroke="#fff" stroke-width="1.050"/></svg>
  <div class="t" id="m_win11" style="left:278.500px;top:384.500px">Windows 11</div>
  <div class="t g" id="m_od" style="left:593px;top:384.500px;color:#8a8a8a">OneDrive</div>

  <!-- bottom-right view icons -->
  <svg style="left:866px;top:645.500px" width="10.500" height="10.500" viewBox="0 0 10.500 10.500"><path d="M0 .8 H10.500 M0 3.800 H10.500 M0 6.800 H10.500 M0 9.800 H10.500" stroke="#5c5c5c" stroke-width="1.300"/></svg>
  <svg style="left:885px;top:645px" width="11" height="12" viewBox="0 0 11 12"><rect x=".6" y=".6" width="9.800" height="8.800" rx="1.200" fill="none" stroke="#555" stroke-width="1.100"/><rect x=".2" y="10.200" width="10.600" height="1.500" fill="#666"/></svg>
</div>
</body>
</html>
